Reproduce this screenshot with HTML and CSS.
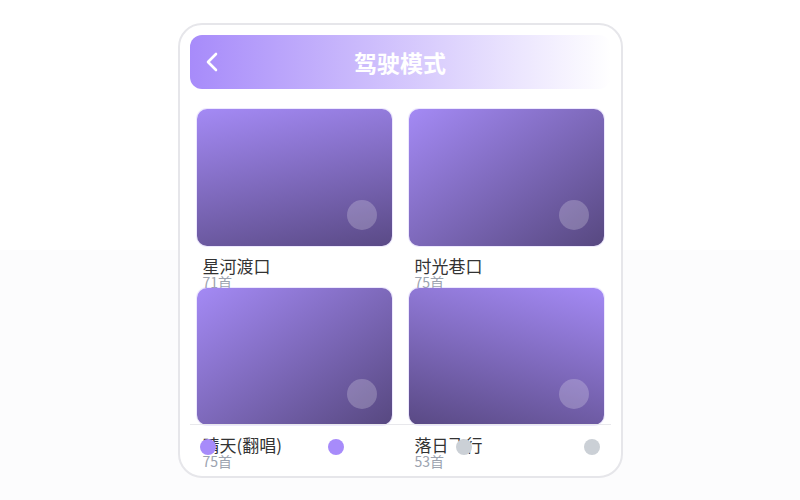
FILE: index.html
```html
<!DOCTYPE html>
<html lang="zh">
<head>
    <meta charset="UTF-8">
    <meta name="viewport" content="width=device-width, initial-scale=1.0">
    <title>驾驶模式</title>
    <link rel="stylesheet" href="styles.css">
</head>
<body>

    <div class="phone">
        <div class="header">
            <svg class="back" width="16" height="22" viewBox="0 0 16 22">
                <path d="M11 3 L3 11 L11 19" fill="none" stroke="#fff" stroke-width="2.6" stroke-linecap="round" stroke-linejoin="round"/>
            </svg>
            <h2>驾驶模式</h2>
        </div>

        <div class="grid">
            <div class="item">
                <div class="cover cover-a"><span class="play"></span></div>
                <div class="info">
                    <div class="name">星河渡口</div>
                    <div class="count">71首</div>
                </div>
            </div>
            <div class="item">
                <div class="cover cover-b"><span class="play"></span></div>
                <div class="info">
                    <div class="name">时光巷口</div>
                    <div class="count">75首</div>
                </div>
            </div>
            <div class="item">
                <div class="cover cover-b"><span class="play"></span></div>
                <div class="info">
                    <div class="name">晴天(翻唱)</div>
                    <div class="count">75首</div>
                </div>
            </div>
            <div class="item">
                <div class="cover cover-d"><span class="play"></span></div>
                <div class="info">
                    <div class="name">落日飞行</div>
                    <div class="count">53首</div>
                </div>
            </div>
        </div>

        <!-- page dots sit over the list -->
        <div class="dots">
            <span class="dot on"></span>
            <span class="dot on"></span>
            <span class="dot"></span>
            <span class="dot"></span>
        </div>
    </div>

</body>
</html>
```

FILE: styles.css
```css
body {
    margin: 0;
    height: 500px;
    font-family: "Noto Sans CJK SC", "Noto Sans", sans-serif;
    background: linear-gradient(to bottom, #ffffff 250px, #fcfcfd 250px);
}
.phone {
    position: relative;
    width: 421px;
    height: 431px;
    margin: 23px auto 0;
    padding: 10px;
    border: 2px solid #e6e6ea;
    border-radius: 24px;
    background: #fff;
    overflow: hidden;
}
.header {
    position: relative;
    height: 54px;
    border-radius: 12px;
    background: linear-gradient(90deg, #a78bfa, rgba(167, 139, 250, 0));
    display: flex;
    align-items: center;
    justify-content: center;
}
.back {
    position: absolute;
    left: 15px;
    top: 16px;
}
.header h2 {
    margin: 0;
    color: #fff;
    font-size: 23px;
    font-weight: 700;
}
.grid {
    display: grid;
    grid-template-columns: 1fr 1fr;
    column-gap: 17px;
    margin: 20px 7px 0;
}
.cover {
    position: relative;
    height: 137px;
    border-radius: 10px;
    box-shadow: 0 0 0 1px rgba(167, 139, 250, 0.2);
}
.cover-a {
    background: linear-gradient(168deg, #a48af5, #5a4a86);
}
.cover-b {
    background: linear-gradient(145deg, #a48af5, #574880);
}
.cover-d {
    background: linear-gradient(195deg, #a48af5, #594984);
}
.play {
    position: absolute;
    right: 15px;
    bottom: 16px;
    width: 30px;
    height: 30px;
    border-radius: 50%;
    background: rgba(255, 255, 255, 0.22);
}
.info {
    height: 42px;
    padding: 10px 0 0 6px;
    box-sizing: border-box;
}
.name {
    font-size: 17px;
    line-height: 19px;
    color: #333;
}
.count {
    font-size: 14px;
    line-height: 14px;
    color: #9ca3af;
}
.dots {
    position: absolute;
    left: 10px;
    right: 10px;
    bottom: 7px;
    height: 44px;
    padding: 0 10px;
    border-top: 1px solid #e8e8ec;
    display: flex;
    justify-content: space-between;
    align-items: center;
}
.dot {
    width: 16px;
    height: 16px;
    border-radius: 50%;
    background: #cbd0d6;
}
.dot.on {
    background: #a78bfa;
}
```
